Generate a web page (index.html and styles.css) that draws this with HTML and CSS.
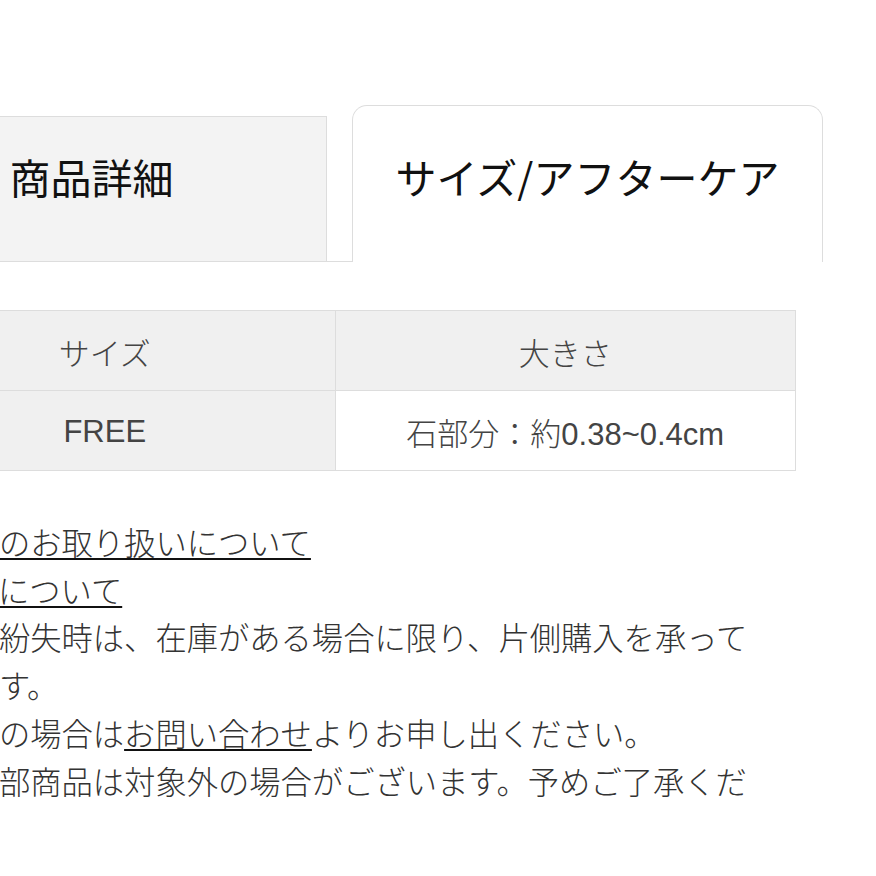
FILE: index.html
```html
<!DOCTYPE html>
<html lang="ja">
<head>
  <meta charset="UTF-8">
  <meta name="viewport" content="width=device-width, initial-scale=1.0">
  <title>サイズ/アフターケア</title>
  <link rel="stylesheet" href="styles.css">
</head>
<body>

  <div class="detail">
    <!-- タブ -->
    <ul class="tabs">
      <li class="tab">商品詳細</li>
      <li class="tab active">サイズ/アフターケア</li>
    </ul>

    <!-- サイズ表 -->
    <table class="size-table">
      <tr>
        <th>サイズ</th>
        <th>大きさ</th>
      </tr>
      <tr>
        <th>FREE</th>
        <td>石部分：約0.38~0.4cm</td>
      </tr>
    </table>

    <!-- アフターケア -->
    <div class="care">
      <p><a href="#">ピアスのお取り扱いについて</a></p>
      <p><a href="#">サイズについて</a></p>
      <p>ピアス紛失時は、在庫がある場合に限り、片側購入を承っております。</p>
      <p>ご希望の場合は<a href="#">お問い合わせ</a>よりお申し出ください。</p>
      <p>また一部商品は対象外の場合がございます。予めご了承ください。</p>
    </div>
  </div>

</body>
</html>
```

FILE: styles.css
```css
* {
  margin: 0;
  padding: 0;
  box-sizing: border-box;
}

body {
  font-family: "Noto Sans CJK JP", "Noto Sans", sans-serif;
  background-color: #fff;
  color: #333;
  overflow: hidden;
}

.detail {
  width: 967px;
  margin: 105px 0 0 -144px;
}

/* Tabs */
.tabs {
  list-style: none;
  display: flex;
  align-items: flex-end;
  gap: 25px;
  border-bottom: 1px solid #ddd;
}

.tab {
  flex: 1;
  font-size: 41px;
  line-height: 60px;
  color: #111;
  text-align: center;
  background-color: #f3f3f3;
  border: 1px solid #ddd;
  border-bottom: none;
  padding: 29px 0 55px;
}

.tab.active {
  background-color: #fff;
  border-radius: 15px 15px 0 0;
  padding: 40px 0 56px;
  margin-bottom: -1px;
}

/* Size table */
.size-table {
  width: 922px;
  margin: 48px 0 0 18px;
  border-collapse: collapse;
  table-layout: fixed;
}

.size-table th,
.size-table td {
  height: 80px;
  border: 1px solid #ddd;
  font-family: "Liberation Sans", "Noto Sans CJK JP", sans-serif;
  font-size: 31px;
  font-weight: 300;
  color: #444;
  text-align: center;
  vertical-align: middle;
  padding-top: 2px;
}

.size-table th {
  background-color: #f0f0f0;
}

.size-table td {
  background-color: #fff;
}

/* Care text */
.care {
  width: 855px;
  margin: 47px 0 0 49px;
  font-size: 31.3px;
  font-weight: 300;
  line-height: 47.7px;
  color: #333;
}

.care a {
  color: #333;
  text-decoration: underline;
  text-decoration-color: #111;
  text-decoration-thickness: 2px;
  text-underline-offset: 3px;
}
```
